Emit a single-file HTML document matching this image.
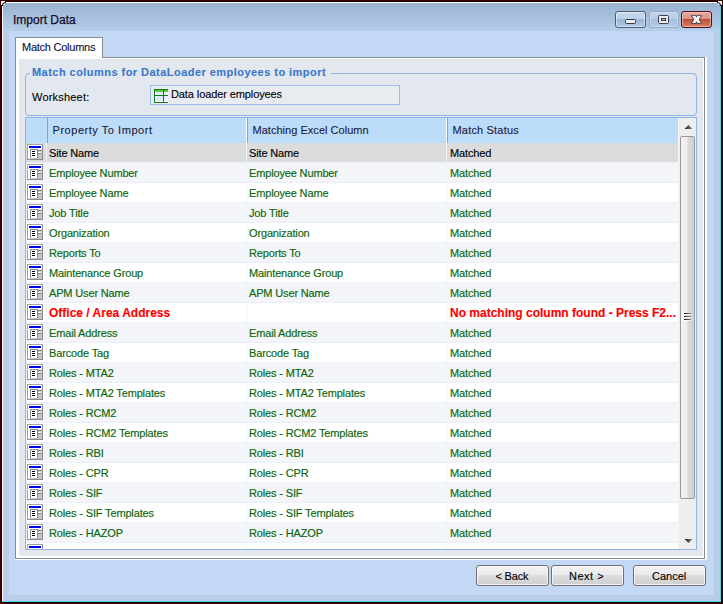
<!DOCTYPE html>
<html><head><meta charset="utf-8"><style>
*{box-sizing:border-box}
html,body{margin:0;padding:0}
body{width:723px;height:604px;position:relative;overflow:hidden;background:#3c0000;font-family:"Liberation Sans",sans-serif;font-size:11px;color:#000;-webkit-text-stroke:0.1px currentColor}
#blk{position:absolute;left:1px;top:1px;width:721px;height:602px;background:#0c0000}
#frame{position:absolute;left:2px;top:2px;width:719px;height:600px;background:#b9cee6;border-left:1px solid #fff;border-top:1px solid #fff}
#cyanR{position:absolute;left:720px;top:2px;width:1px;height:600px;background:#4fd8f8}
#cyanB{position:absolute;left:2px;top:601px;width:719px;height:1px;background:#4fd8f8}
#title{position:absolute;left:3px;top:3px;width:717px;height:28px;background:linear-gradient(#99b2d0,#b5cfea)}
#ttext{position:absolute;left:13px;top:13px;font-size:12px;color:#140c28;-webkit-text-stroke:0.25px #140c28;white-space:nowrap}
#body{position:absolute;left:9px;top:31px;width:705px;height:564px;background:#c3d8f5}
.wb{position:absolute;top:11px;height:17px;border-radius:3px}
#bmin{left:615px;width:31px;border:1px solid #4e5d72;background:linear-gradient(#c5d8ee 0,#bcd1ea 45%,#9ab6d6 46%,#b0c8e4 100%);box-shadow:inset 0 0 0 1px rgba(255,255,255,.5)}
#bmax{left:649px;width:30px;border:1px solid #8ca6c6;background:linear-gradient(#bfd3ec 0,#b8cde8 45%,#a3bddc 46%,#b6cde8 100%);box-shadow:inset 0 0 0 1px rgba(255,255,255,.35)}
#bclose{left:681px;width:31px;border:1px solid #4a0f18;background:linear-gradient(#e8aa9c 0,#dc9484 45%,#c04a30 46%,#d8806a 100%);box-shadow:inset 0 0 0 1px rgba(255,210,200,.6)}
#tab{position:absolute;left:15px;top:37px;width:88px;height:21px;background:#fff;border:1px solid #898c95;border-bottom:none}
#tabtext{position:absolute;left:22px;top:41px;white-space:nowrap;color:#0c0c40;letter-spacing:-0.25px}
#panel{position:absolute;left:15px;top:57px;width:690px;height:502px;border:1px solid #898c95;background:#e3e7ee}
#pwr{position:absolute;left:705px;top:57px;width:2px;height:503px;background:#fff}
#pwb{position:absolute;left:15px;top:559px;width:692px;height:1px;background:#fff}
#pwhite{position:absolute;left:16px;top:58px;width:688px;height:500px;border-left:3px solid #fff;border-top:1px solid #fff;border-right:1px solid #fff;border-bottom:2px solid #fff}
#tabjoin{position:absolute;left:16px;top:57px;width:86px;height:2px;background:#fff}
#gbox{position:absolute;left:25px;top:73px;width:672px;height:43px;border:1px solid #92b4e2;border-radius:4px}
#gtitle{position:absolute;left:30px;top:66px;padding:0 5px 0 2px;background:#e3e7ee;font-weight:bold;color:#3a78cc;white-space:nowrap;letter-spacing:0.46px}
#wlabel{position:absolute;left:32px;top:91px;white-space:nowrap;color:#000;letter-spacing:0.2px}
#combo{position:absolute;left:150px;top:85px;width:250px;height:20px;border:1px solid #9bbbe6;background:#e8ebf0}
#ctext{position:absolute;left:171px;top:88px;white-space:nowrap;color:#000;letter-spacing:-0.1px}
#grid{position:absolute;left:25px;top:117px;width:672px;height:433px;border:1px solid #8fb3e2;background:#fff;overflow:hidden}
#hdr{position:absolute;left:0;top:0;width:652px;height:25px;background:#bcdcf9}
.hd{position:absolute;top:0;height:25px;width:2px;border-left:1px solid #fff;border-right:1px solid #9a9fa8}
.ht{position:absolute;top:6px;white-space:nowrap;color:#1a1a3a;letter-spacing:0.4px}
.row{position:absolute;left:0;width:652px;height:20px;border-bottom:1px solid #e9eff8}
.row.even{background:#fff}
.row.odd{background:#f3f5f8}
.row.sel{background:#dcdcdc}
.rh{position:absolute;left:0;top:0;width:21px;height:19px;border-right:1px solid #eef3fb}
.ic{position:absolute;left:1px;top:1px}
.c{position:absolute;top:4px;white-space:nowrap;color:#0a650a;letter-spacing:-0.15px;-webkit-text-stroke:0.15px currentColor}
.sel .c{color:#000}
.c1{left:23px}
.c2{left:223px}
.c3{left:424px}
.cd{position:absolute;top:0;width:1px;height:19px;background:#eef3fb}
.red .c{color:#ff0000;font-weight:bold;letter-spacing:0;font-size:12px;top:3px}
#sb{position:absolute;left:652px;top:0;width:18px;height:431px;background:#eeeeee;border-left:1px solid #f6f6f6}
#thumb{position:absolute;left:1px;top:18px;width:15px;height:363px;border:1px solid #989898;border-radius:2px;background:linear-gradient(90deg,#f4f4f4,#ececec 45%,#d9d9d9 55%,#cfcfcf)}
.btn{position:absolute;top:565px;height:21px;border:1px solid #707070;border-radius:3px;background:linear-gradient(#f2f2f2 0,#ebebeb 45%,#dddddd 50%,#cfcfcf 100%);box-shadow:inset 0 0 0 1px rgba(255,255,255,.7)}
.bt{position:absolute;top:570px;white-space:nowrap;color:#000}

</style></head><body>
<div id="blk"></div><div id="frame"></div>
<div id="cyanR"></div><div id="cyanB"></div>
<div id="title"></div>
<svg style="position:absolute;left:0;top:0" width="723" height="8">
<rect x="1" y="1" width="4" height="4" fill="#ffffff"/>
<path d="M2.5 6 Q2.5 2.5 6 2.5" stroke="#2a1a1a" stroke-width="1.2" fill="none"/>
<rect x="718" y="1" width="4" height="4" fill="#ffffff"/>
<path d="M717 2.5 Q720.5 2.5 720.5 6" stroke="#2a1a1a" stroke-width="1.2" fill="none"/>
</svg>
<div id="ttext">Import Data</div>
<div class="wb" id="bmin"></div>
<div class="wb" id="bmax"></div>
<div class="wb" id="bclose"></div>
<svg style="position:absolute;left:0;top:0" width="723" height="40">
<rect x="625.5" y="19.5" width="10" height="4" rx="1" fill="#ebebeb" stroke="#333b4c" stroke-width="1"/>
<rect x="658.5" y="15.5" width="10" height="8" rx="1" fill="#ebebeb" stroke="#3a4052" stroke-width="1"/>
<rect x="661.5" y="18.5" width="4" height="2" fill="#a9c0dc" stroke="#3a4052" stroke-width="1"/>
<path d="M692 15.8 L695.4 15.8 L696.5 17.5 L697.6 15.8 L701 15.8 L698.7 19.4 L701 23 L697.6 23 L696.5 21.3 L695.4 23 L692 23 L694.3 19.4 Z" fill="#f4f4f4" stroke="#343c50" stroke-width="1.7" stroke-linejoin="round" paint-order="stroke"/>
</svg>
<div id="body"></div>
<div id="panel"></div>
<div id="pwhite"></div><div id="pwr"></div><div id="pwb"></div>
<div id="tab"></div>
<div id="tabjoin"></div>
<div id="tabtext">Match Columns</div>
<div id="gbox"></div>
<div id="gtitle">Match columns for DataLoader employees to import</div>
<div id="wlabel">Worksheet:</div>
<div id="combo"></div>
<svg style="position:absolute;left:154px;top:89px" width="14" height="14" shape-rendering="crispEdges">
<rect x="0" y="0" width="14" height="14" fill="#137a17"/>
<rect x="1" y="1" width="8" height="2" fill="#5ec93c"/><rect x="10" y="1" width="4" height="2" fill="#5ec93c"/>
<rect x="1" y="3" width="8" height="3" fill="#dcebf9"/><rect x="10" y="3" width="4" height="3" fill="#e6f1fb"/>
<rect x="1" y="7" width="8" height="6" fill="#dcebf9"/><rect x="10" y="7" width="4" height="6" fill="#e6f1fb"/>
<rect x="1" y="3" width="1" height="3" fill="#fff"/><rect x="1" y="7" width="1" height="6" fill="#fff"/>
<rect x="1" y="12" width="8" height="1" fill="#fff"/><rect x="10" y="12" width="4" height="1" fill="#fff"/>
</svg>
<div id="ctext">Data loader employees</div>
<div id="grid">
<div id="hdr">
<div class="hd" style="left:21px;width:1px;border-left:none"></div>
<div class="hd" style="left:220px"></div>
<div class="hd" style="left:420px"></div>
<div class="ht" style="left:26.5px;letter-spacing:0.54px">Property To Import</div>
<div class="ht" style="left:226.5px;letter-spacing:0.03px">Matching Excel Column</div>
<div class="ht" style="left:426.5px;letter-spacing:0.18px">Match Status</div>
</div>
<div class="row sel" style="top:25px"><div class="rh"><svg class="ic" width="16" height="16" viewBox="0 0 16 16" shape-rendering="crispEdges"><rect x="0" y="0" width="16" height="16" fill="#a4a4a4"/><rect x="1" y="1" width="14" height="14" fill="#ffffff"/><rect x="2" y="2" width="12" height="2" fill="#0000ff"/><rect x="3" y="5" width="12" height="10" fill="#c4c4c4"/><rect x="3" y="5" width="8" height="9" fill="#8c8c8c"/><rect x="4" y="6" width="6" height="8" fill="#ffffff"/><rect x="5" y="7" width="3" height="1" fill="#000"/><rect x="5" y="9" width="3" height="1" fill="#000"/><rect x="5" y="11" width="3" height="1" fill="#000"/><rect x="11" y="5" width="3" height="1" fill="#ffffff"/><rect x="11" y="6" width="3" height="1" fill="#7c7c7c"/><rect x="11" y="8" width="3" height="1" fill="#ffffff"/><rect x="11" y="9" width="3" height="1" fill="#7c7c7c"/><rect x="15" y="1" width="1" height="15" fill="#8a8a8a"/><rect x="0" y="15" width="16" height="1" fill="#8a8a8a"/></svg></div><div class="cd" style="left:220px"></div><div class="cd" style="left:420px"></div><div class="c c1">Site Name</div><div class="c c2">Site Name</div><div class="c c3">Matched</div></div>
<div class="row odd" style="top:45px"><div class="rh"><svg class="ic" width="16" height="16" viewBox="0 0 16 16" shape-rendering="crispEdges"><rect x="0" y="0" width="16" height="16" fill="#a4a4a4"/><rect x="1" y="1" width="14" height="14" fill="#ffffff"/><rect x="2" y="2" width="12" height="2" fill="#0000ff"/><rect x="3" y="5" width="12" height="10" fill="#c4c4c4"/><rect x="3" y="5" width="8" height="9" fill="#8c8c8c"/><rect x="4" y="6" width="6" height="8" fill="#ffffff"/><rect x="5" y="7" width="3" height="1" fill="#000"/><rect x="5" y="9" width="3" height="1" fill="#000"/><rect x="5" y="11" width="3" height="1" fill="#000"/><rect x="11" y="5" width="3" height="1" fill="#ffffff"/><rect x="11" y="6" width="3" height="1" fill="#7c7c7c"/><rect x="11" y="8" width="3" height="1" fill="#ffffff"/><rect x="11" y="9" width="3" height="1" fill="#7c7c7c"/><rect x="15" y="1" width="1" height="15" fill="#8a8a8a"/><rect x="0" y="15" width="16" height="1" fill="#8a8a8a"/></svg></div><div class="cd" style="left:220px"></div><div class="cd" style="left:420px"></div><div class="c c1">Employee Number</div><div class="c c2">Employee Number</div><div class="c c3">Matched</div></div>
<div class="row even" style="top:65px"><div class="rh"><svg class="ic" width="16" height="16" viewBox="0 0 16 16" shape-rendering="crispEdges"><rect x="0" y="0" width="16" height="16" fill="#a4a4a4"/><rect x="1" y="1" width="14" height="14" fill="#ffffff"/><rect x="2" y="2" width="12" height="2" fill="#0000ff"/><rect x="3" y="5" width="12" height="10" fill="#c4c4c4"/><rect x="3" y="5" width="8" height="9" fill="#8c8c8c"/><rect x="4" y="6" width="6" height="8" fill="#ffffff"/><rect x="5" y="7" width="3" height="1" fill="#000"/><rect x="5" y="9" width="3" height="1" fill="#000"/><rect x="5" y="11" width="3" height="1" fill="#000"/><rect x="11" y="5" width="3" height="1" fill="#ffffff"/><rect x="11" y="6" width="3" height="1" fill="#7c7c7c"/><rect x="11" y="8" width="3" height="1" fill="#ffffff"/><rect x="11" y="9" width="3" height="1" fill="#7c7c7c"/><rect x="15" y="1" width="1" height="15" fill="#8a8a8a"/><rect x="0" y="15" width="16" height="1" fill="#8a8a8a"/></svg></div><div class="cd" style="left:220px"></div><div class="cd" style="left:420px"></div><div class="c c1">Employee Name</div><div class="c c2">Employee Name</div><div class="c c3">Matched</div></div>
<div class="row odd" style="top:85px"><div class="rh"><svg class="ic" width="16" height="16" viewBox="0 0 16 16" shape-rendering="crispEdges"><rect x="0" y="0" width="16" height="16" fill="#a4a4a4"/><rect x="1" y="1" width="14" height="14" fill="#ffffff"/><rect x="2" y="2" width="12" height="2" fill="#0000ff"/><rect x="3" y="5" width="12" height="10" fill="#c4c4c4"/><rect x="3" y="5" width="8" height="9" fill="#8c8c8c"/><rect x="4" y="6" width="6" height="8" fill="#ffffff"/><rect x="5" y="7" width="3" height="1" fill="#000"/><rect x="5" y="9" width="3" height="1" fill="#000"/><rect x="5" y="11" width="3" height="1" fill="#000"/><rect x="11" y="5" width="3" height="1" fill="#ffffff"/><rect x="11" y="6" width="3" height="1" fill="#7c7c7c"/><rect x="11" y="8" width="3" height="1" fill="#ffffff"/><rect x="11" y="9" width="3" height="1" fill="#7c7c7c"/><rect x="15" y="1" width="1" height="15" fill="#8a8a8a"/><rect x="0" y="15" width="16" height="1" fill="#8a8a8a"/></svg></div><div class="cd" style="left:220px"></div><div class="cd" style="left:420px"></div><div class="c c1">Job Title</div><div class="c c2">Job Title</div><div class="c c3">Matched</div></div>
<div class="row even" style="top:105px"><div class="rh"><svg class="ic" width="16" height="16" viewBox="0 0 16 16" shape-rendering="crispEdges"><rect x="0" y="0" width="16" height="16" fill="#a4a4a4"/><rect x="1" y="1" width="14" height="14" fill="#ffffff"/><rect x="2" y="2" width="12" height="2" fill="#0000ff"/><rect x="3" y="5" width="12" height="10" fill="#c4c4c4"/><rect x="3" y="5" width="8" height="9" fill="#8c8c8c"/><rect x="4" y="6" width="6" height="8" fill="#ffffff"/><rect x="5" y="7" width="3" height="1" fill="#000"/><rect x="5" y="9" width="3" height="1" fill="#000"/><rect x="5" y="11" width="3" height="1" fill="#000"/><rect x="11" y="5" width="3" height="1" fill="#ffffff"/><rect x="11" y="6" width="3" height="1" fill="#7c7c7c"/><rect x="11" y="8" width="3" height="1" fill="#ffffff"/><rect x="11" y="9" width="3" height="1" fill="#7c7c7c"/><rect x="15" y="1" width="1" height="15" fill="#8a8a8a"/><rect x="0" y="15" width="16" height="1" fill="#8a8a8a"/></svg></div><div class="cd" style="left:220px"></div><div class="cd" style="left:420px"></div><div class="c c1">Organization</div><div class="c c2">Organization</div><div class="c c3">Matched</div></div>
<div class="row odd" style="top:125px"><div class="rh"><svg class="ic" width="16" height="16" viewBox="0 0 16 16" shape-rendering="crispEdges"><rect x="0" y="0" width="16" height="16" fill="#a4a4a4"/><rect x="1" y="1" width="14" height="14" fill="#ffffff"/><rect x="2" y="2" width="12" height="2" fill="#0000ff"/><rect x="3" y="5" width="12" height="10" fill="#c4c4c4"/><rect x="3" y="5" width="8" height="9" fill="#8c8c8c"/><rect x="4" y="6" width="6" height="8" fill="#ffffff"/><rect x="5" y="7" width="3" height="1" fill="#000"/><rect x="5" y="9" width="3" height="1" fill="#000"/><rect x="5" y="11" width="3" height="1" fill="#000"/><rect x="11" y="5" width="3" height="1" fill="#ffffff"/><rect x="11" y="6" width="3" height="1" fill="#7c7c7c"/><rect x="11" y="8" width="3" height="1" fill="#ffffff"/><rect x="11" y="9" width="3" height="1" fill="#7c7c7c"/><rect x="15" y="1" width="1" height="15" fill="#8a8a8a"/><rect x="0" y="15" width="16" height="1" fill="#8a8a8a"/></svg></div><div class="cd" style="left:220px"></div><div class="cd" style="left:420px"></div><div class="c c1">Reports To</div><div class="c c2">Reports To</div><div class="c c3">Matched</div></div>
<div class="row even" style="top:145px"><div class="rh"><svg class="ic" width="16" height="16" viewBox="0 0 16 16" shape-rendering="crispEdges"><rect x="0" y="0" width="16" height="16" fill="#a4a4a4"/><rect x="1" y="1" width="14" height="14" fill="#ffffff"/><rect x="2" y="2" width="12" height="2" fill="#0000ff"/><rect x="3" y="5" width="12" height="10" fill="#c4c4c4"/><rect x="3" y="5" width="8" height="9" fill="#8c8c8c"/><rect x="4" y="6" width="6" height="8" fill="#ffffff"/><rect x="5" y="7" width="3" height="1" fill="#000"/><rect x="5" y="9" width="3" height="1" fill="#000"/><rect x="5" y="11" width="3" height="1" fill="#000"/><rect x="11" y="5" width="3" height="1" fill="#ffffff"/><rect x="11" y="6" width="3" height="1" fill="#7c7c7c"/><rect x="11" y="8" width="3" height="1" fill="#ffffff"/><rect x="11" y="9" width="3" height="1" fill="#7c7c7c"/><rect x="15" y="1" width="1" height="15" fill="#8a8a8a"/><rect x="0" y="15" width="16" height="1" fill="#8a8a8a"/></svg></div><div class="cd" style="left:220px"></div><div class="cd" style="left:420px"></div><div class="c c1">Maintenance Group</div><div class="c c2">Maintenance Group</div><div class="c c3">Matched</div></div>
<div class="row odd" style="top:165px"><div class="rh"><svg class="ic" width="16" height="16" viewBox="0 0 16 16" shape-rendering="crispEdges"><rect x="0" y="0" width="16" height="16" fill="#a4a4a4"/><rect x="1" y="1" width="14" height="14" fill="#ffffff"/><rect x="2" y="2" width="12" height="2" fill="#0000ff"/><rect x="3" y="5" width="12" height="10" fill="#c4c4c4"/><rect x="3" y="5" width="8" height="9" fill="#8c8c8c"/><rect x="4" y="6" width="6" height="8" fill="#ffffff"/><rect x="5" y="7" width="3" height="1" fill="#000"/><rect x="5" y="9" width="3" height="1" fill="#000"/><rect x="5" y="11" width="3" height="1" fill="#000"/><rect x="11" y="5" width="3" height="1" fill="#ffffff"/><rect x="11" y="6" width="3" height="1" fill="#7c7c7c"/><rect x="11" y="8" width="3" height="1" fill="#ffffff"/><rect x="11" y="9" width="3" height="1" fill="#7c7c7c"/><rect x="15" y="1" width="1" height="15" fill="#8a8a8a"/><rect x="0" y="15" width="16" height="1" fill="#8a8a8a"/></svg></div><div class="cd" style="left:220px"></div><div class="cd" style="left:420px"></div><div class="c c1">APM User Name</div><div class="c c2">APM User Name</div><div class="c c3">Matched</div></div>
<div class="row even red" style="top:185px"><div class="rh"><svg class="ic" width="16" height="16" viewBox="0 0 16 16" shape-rendering="crispEdges"><rect x="0" y="0" width="16" height="16" fill="#a4a4a4"/><rect x="1" y="1" width="14" height="14" fill="#ffffff"/><rect x="2" y="2" width="12" height="2" fill="#0000ff"/><rect x="3" y="5" width="12" height="10" fill="#c4c4c4"/><rect x="3" y="5" width="8" height="9" fill="#8c8c8c"/><rect x="4" y="6" width="6" height="8" fill="#ffffff"/><rect x="5" y="7" width="3" height="1" fill="#000"/><rect x="5" y="9" width="3" height="1" fill="#000"/><rect x="5" y="11" width="3" height="1" fill="#000"/><rect x="11" y="5" width="3" height="1" fill="#ffffff"/><rect x="11" y="6" width="3" height="1" fill="#7c7c7c"/><rect x="11" y="8" width="3" height="1" fill="#ffffff"/><rect x="11" y="9" width="3" height="1" fill="#7c7c7c"/><rect x="15" y="1" width="1" height="15" fill="#8a8a8a"/><rect x="0" y="15" width="16" height="1" fill="#8a8a8a"/></svg></div><div class="cd" style="left:220px"></div><div class="cd" style="left:420px"></div><div class="c c1">Office / Area Address</div><div class="c c2"></div><div class="c c3">No matching column found - Press F2...</div></div>
<div class="row odd" style="top:205px"><div class="rh"><svg class="ic" width="16" height="16" viewBox="0 0 16 16" shape-rendering="crispEdges"><rect x="0" y="0" width="16" height="16" fill="#a4a4a4"/><rect x="1" y="1" width="14" height="14" fill="#ffffff"/><rect x="2" y="2" width="12" height="2" fill="#0000ff"/><rect x="3" y="5" width="12" height="10" fill="#c4c4c4"/><rect x="3" y="5" width="8" height="9" fill="#8c8c8c"/><rect x="4" y="6" width="6" height="8" fill="#ffffff"/><rect x="5" y="7" width="3" height="1" fill="#000"/><rect x="5" y="9" width="3" height="1" fill="#000"/><rect x="5" y="11" width="3" height="1" fill="#000"/><rect x="11" y="5" width="3" height="1" fill="#ffffff"/><rect x="11" y="6" width="3" height="1" fill="#7c7c7c"/><rect x="11" y="8" width="3" height="1" fill="#ffffff"/><rect x="11" y="9" width="3" height="1" fill="#7c7c7c"/><rect x="15" y="1" width="1" height="15" fill="#8a8a8a"/><rect x="0" y="15" width="16" height="1" fill="#8a8a8a"/></svg></div><div class="cd" style="left:220px"></div><div class="cd" style="left:420px"></div><div class="c c1">Email Address</div><div class="c c2">Email Address</div><div class="c c3">Matched</div></div>
<div class="row even" style="top:225px"><div class="rh"><svg class="ic" width="16" height="16" viewBox="0 0 16 16" shape-rendering="crispEdges"><rect x="0" y="0" width="16" height="16" fill="#a4a4a4"/><rect x="1" y="1" width="14" height="14" fill="#ffffff"/><rect x="2" y="2" width="12" height="2" fill="#0000ff"/><rect x="3" y="5" width="12" height="10" fill="#c4c4c4"/><rect x="3" y="5" width="8" height="9" fill="#8c8c8c"/><rect x="4" y="6" width="6" height="8" fill="#ffffff"/><rect x="5" y="7" width="3" height="1" fill="#000"/><rect x="5" y="9" width="3" height="1" fill="#000"/><rect x="5" y="11" width="3" height="1" fill="#000"/><rect x="11" y="5" width="3" height="1" fill="#ffffff"/><rect x="11" y="6" width="3" height="1" fill="#7c7c7c"/><rect x="11" y="8" width="3" height="1" fill="#ffffff"/><rect x="11" y="9" width="3" height="1" fill="#7c7c7c"/><rect x="15" y="1" width="1" height="15" fill="#8a8a8a"/><rect x="0" y="15" width="16" height="1" fill="#8a8a8a"/></svg></div><div class="cd" style="left:220px"></div><div class="cd" style="left:420px"></div><div class="c c1">Barcode Tag</div><div class="c c2">Barcode Tag</div><div class="c c3">Matched</div></div>
<div class="row odd" style="top:245px"><div class="rh"><svg class="ic" width="16" height="16" viewBox="0 0 16 16" shape-rendering="crispEdges"><rect x="0" y="0" width="16" height="16" fill="#a4a4a4"/><rect x="1" y="1" width="14" height="14" fill="#ffffff"/><rect x="2" y="2" width="12" height="2" fill="#0000ff"/><rect x="3" y="5" width="12" height="10" fill="#c4c4c4"/><rect x="3" y="5" width="8" height="9" fill="#8c8c8c"/><rect x="4" y="6" width="6" height="8" fill="#ffffff"/><rect x="5" y="7" width="3" height="1" fill="#000"/><rect x="5" y="9" width="3" height="1" fill="#000"/><rect x="5" y="11" width="3" height="1" fill="#000"/><rect x="11" y="5" width="3" height="1" fill="#ffffff"/><rect x="11" y="6" width="3" height="1" fill="#7c7c7c"/><rect x="11" y="8" width="3" height="1" fill="#ffffff"/><rect x="11" y="9" width="3" height="1" fill="#7c7c7c"/><rect x="15" y="1" width="1" height="15" fill="#8a8a8a"/><rect x="0" y="15" width="16" height="1" fill="#8a8a8a"/></svg></div><div class="cd" style="left:220px"></div><div class="cd" style="left:420px"></div><div class="c c1">Roles - MTA2</div><div class="c c2">Roles - MTA2</div><div class="c c3">Matched</div></div>
<div class="row even" style="top:265px"><div class="rh"><svg class="ic" width="16" height="16" viewBox="0 0 16 16" shape-rendering="crispEdges"><rect x="0" y="0" width="16" height="16" fill="#a4a4a4"/><rect x="1" y="1" width="14" height="14" fill="#ffffff"/><rect x="2" y="2" width="12" height="2" fill="#0000ff"/><rect x="3" y="5" width="12" height="10" fill="#c4c4c4"/><rect x="3" y="5" width="8" height="9" fill="#8c8c8c"/><rect x="4" y="6" width="6" height="8" fill="#ffffff"/><rect x="5" y="7" width="3" height="1" fill="#000"/><rect x="5" y="9" width="3" height="1" fill="#000"/><rect x="5" y="11" width="3" height="1" fill="#000"/><rect x="11" y="5" width="3" height="1" fill="#ffffff"/><rect x="11" y="6" width="3" height="1" fill="#7c7c7c"/><rect x="11" y="8" width="3" height="1" fill="#ffffff"/><rect x="11" y="9" width="3" height="1" fill="#7c7c7c"/><rect x="15" y="1" width="1" height="15" fill="#8a8a8a"/><rect x="0" y="15" width="16" height="1" fill="#8a8a8a"/></svg></div><div class="cd" style="left:220px"></div><div class="cd" style="left:420px"></div><div class="c c1">Roles - MTA2 Templates</div><div class="c c2">Roles - MTA2 Templates</div><div class="c c3">Matched</div></div>
<div class="row odd" style="top:285px"><div class="rh"><svg class="ic" width="16" height="16" viewBox="0 0 16 16" shape-rendering="crispEdges"><rect x="0" y="0" width="16" height="16" fill="#a4a4a4"/><rect x="1" y="1" width="14" height="14" fill="#ffffff"/><rect x="2" y="2" width="12" height="2" fill="#0000ff"/><rect x="3" y="5" width="12" height="10" fill="#c4c4c4"/><rect x="3" y="5" width="8" height="9" fill="#8c8c8c"/><rect x="4" y="6" width="6" height="8" fill="#ffffff"/><rect x="5" y="7" width="3" height="1" fill="#000"/><rect x="5" y="9" width="3" height="1" fill="#000"/><rect x="5" y="11" width="3" height="1" fill="#000"/><rect x="11" y="5" width="3" height="1" fill="#ffffff"/><rect x="11" y="6" width="3" height="1" fill="#7c7c7c"/><rect x="11" y="8" width="3" height="1" fill="#ffffff"/><rect x="11" y="9" width="3" height="1" fill="#7c7c7c"/><rect x="15" y="1" width="1" height="15" fill="#8a8a8a"/><rect x="0" y="15" width="16" height="1" fill="#8a8a8a"/></svg></div><div class="cd" style="left:220px"></div><div class="cd" style="left:420px"></div><div class="c c1">Roles - RCM2</div><div class="c c2">Roles - RCM2</div><div class="c c3">Matched</div></div>
<div class="row even" style="top:305px"><div class="rh"><svg class="ic" width="16" height="16" viewBox="0 0 16 16" shape-rendering="crispEdges"><rect x="0" y="0" width="16" height="16" fill="#a4a4a4"/><rect x="1" y="1" width="14" height="14" fill="#ffffff"/><rect x="2" y="2" width="12" height="2" fill="#0000ff"/><rect x="3" y="5" width="12" height="10" fill="#c4c4c4"/><rect x="3" y="5" width="8" height="9" fill="#8c8c8c"/><rect x="4" y="6" width="6" height="8" fill="#ffffff"/><rect x="5" y="7" width="3" height="1" fill="#000"/><rect x="5" y="9" width="3" height="1" fill="#000"/><rect x="5" y="11" width="3" height="1" fill="#000"/><rect x="11" y="5" width="3" height="1" fill="#ffffff"/><rect x="11" y="6" width="3" height="1" fill="#7c7c7c"/><rect x="11" y="8" width="3" height="1" fill="#ffffff"/><rect x="11" y="9" width="3" height="1" fill="#7c7c7c"/><rect x="15" y="1" width="1" height="15" fill="#8a8a8a"/><rect x="0" y="15" width="16" height="1" fill="#8a8a8a"/></svg></div><div class="cd" style="left:220px"></div><div class="cd" style="left:420px"></div><div class="c c1">Roles - RCM2 Templates</div><div class="c c2">Roles - RCM2 Templates</div><div class="c c3">Matched</div></div>
<div class="row odd" style="top:325px"><div class="rh"><svg class="ic" width="16" height="16" viewBox="0 0 16 16" shape-rendering="crispEdges"><rect x="0" y="0" width="16" height="16" fill="#a4a4a4"/><rect x="1" y="1" width="14" height="14" fill="#ffffff"/><rect x="2" y="2" width="12" height="2" fill="#0000ff"/><rect x="3" y="5" width="12" height="10" fill="#c4c4c4"/><rect x="3" y="5" width="8" height="9" fill="#8c8c8c"/><rect x="4" y="6" width="6" height="8" fill="#ffffff"/><rect x="5" y="7" width="3" height="1" fill="#000"/><rect x="5" y="9" width="3" height="1" fill="#000"/><rect x="5" y="11" width="3" height="1" fill="#000"/><rect x="11" y="5" width="3" height="1" fill="#ffffff"/><rect x="11" y="6" width="3" height="1" fill="#7c7c7c"/><rect x="11" y="8" width="3" height="1" fill="#ffffff"/><rect x="11" y="9" width="3" height="1" fill="#7c7c7c"/><rect x="15" y="1" width="1" height="15" fill="#8a8a8a"/><rect x="0" y="15" width="16" height="1" fill="#8a8a8a"/></svg></div><div class="cd" style="left:220px"></div><div class="cd" style="left:420px"></div><div class="c c1">Roles - RBI</div><div class="c c2">Roles - RBI</div><div class="c c3">Matched</div></div>
<div class="row even" style="top:345px"><div class="rh"><svg class="ic" width="16" height="16" viewBox="0 0 16 16" shape-rendering="crispEdges"><rect x="0" y="0" width="16" height="16" fill="#a4a4a4"/><rect x="1" y="1" width="14" height="14" fill="#ffffff"/><rect x="2" y="2" width="12" height="2" fill="#0000ff"/><rect x="3" y="5" width="12" height="10" fill="#c4c4c4"/><rect x="3" y="5" width="8" height="9" fill="#8c8c8c"/><rect x="4" y="6" width="6" height="8" fill="#ffffff"/><rect x="5" y="7" width="3" height="1" fill="#000"/><rect x="5" y="9" width="3" height="1" fill="#000"/><rect x="5" y="11" width="3" height="1" fill="#000"/><rect x="11" y="5" width="3" height="1" fill="#ffffff"/><rect x="11" y="6" width="3" height="1" fill="#7c7c7c"/><rect x="11" y="8" width="3" height="1" fill="#ffffff"/><rect x="11" y="9" width="3" height="1" fill="#7c7c7c"/><rect x="15" y="1" width="1" height="15" fill="#8a8a8a"/><rect x="0" y="15" width="16" height="1" fill="#8a8a8a"/></svg></div><div class="cd" style="left:220px"></div><div class="cd" style="left:420px"></div><div class="c c1">Roles - CPR</div><div class="c c2">Roles - CPR</div><div class="c c3">Matched</div></div>
<div class="row odd" style="top:365px"><div class="rh"><svg class="ic" width="16" height="16" viewBox="0 0 16 16" shape-rendering="crispEdges"><rect x="0" y="0" width="16" height="16" fill="#a4a4a4"/><rect x="1" y="1" width="14" height="14" fill="#ffffff"/><rect x="2" y="2" width="12" height="2" fill="#0000ff"/><rect x="3" y="5" width="12" height="10" fill="#c4c4c4"/><rect x="3" y="5" width="8" height="9" fill="#8c8c8c"/><rect x="4" y="6" width="6" height="8" fill="#ffffff"/><rect x="5" y="7" width="3" height="1" fill="#000"/><rect x="5" y="9" width="3" height="1" fill="#000"/><rect x="5" y="11" width="3" height="1" fill="#000"/><rect x="11" y="5" width="3" height="1" fill="#ffffff"/><rect x="11" y="6" width="3" height="1" fill="#7c7c7c"/><rect x="11" y="8" width="3" height="1" fill="#ffffff"/><rect x="11" y="9" width="3" height="1" fill="#7c7c7c"/><rect x="15" y="1" width="1" height="15" fill="#8a8a8a"/><rect x="0" y="15" width="16" height="1" fill="#8a8a8a"/></svg></div><div class="cd" style="left:220px"></div><div class="cd" style="left:420px"></div><div class="c c1">Roles - SIF</div><div class="c c2">Roles - SIF</div><div class="c c3">Matched</div></div>
<div class="row even" style="top:385px"><div class="rh"><svg class="ic" width="16" height="16" viewBox="0 0 16 16" shape-rendering="crispEdges"><rect x="0" y="0" width="16" height="16" fill="#a4a4a4"/><rect x="1" y="1" width="14" height="14" fill="#ffffff"/><rect x="2" y="2" width="12" height="2" fill="#0000ff"/><rect x="3" y="5" width="12" height="10" fill="#c4c4c4"/><rect x="3" y="5" width="8" height="9" fill="#8c8c8c"/><rect x="4" y="6" width="6" height="8" fill="#ffffff"/><rect x="5" y="7" width="3" height="1" fill="#000"/><rect x="5" y="9" width="3" height="1" fill="#000"/><rect x="5" y="11" width="3" height="1" fill="#000"/><rect x="11" y="5" width="3" height="1" fill="#ffffff"/><rect x="11" y="6" width="3" height="1" fill="#7c7c7c"/><rect x="11" y="8" width="3" height="1" fill="#ffffff"/><rect x="11" y="9" width="3" height="1" fill="#7c7c7c"/><rect x="15" y="1" width="1" height="15" fill="#8a8a8a"/><rect x="0" y="15" width="16" height="1" fill="#8a8a8a"/></svg></div><div class="cd" style="left:220px"></div><div class="cd" style="left:420px"></div><div class="c c1">Roles - SIF Templates</div><div class="c c2">Roles - SIF Templates</div><div class="c c3">Matched</div></div>
<div class="row odd" style="top:405px"><div class="rh"><svg class="ic" width="16" height="16" viewBox="0 0 16 16" shape-rendering="crispEdges"><rect x="0" y="0" width="16" height="16" fill="#a4a4a4"/><rect x="1" y="1" width="14" height="14" fill="#ffffff"/><rect x="2" y="2" width="12" height="2" fill="#0000ff"/><rect x="3" y="5" width="12" height="10" fill="#c4c4c4"/><rect x="3" y="5" width="8" height="9" fill="#8c8c8c"/><rect x="4" y="6" width="6" height="8" fill="#ffffff"/><rect x="5" y="7" width="3" height="1" fill="#000"/><rect x="5" y="9" width="3" height="1" fill="#000"/><rect x="5" y="11" width="3" height="1" fill="#000"/><rect x="11" y="5" width="3" height="1" fill="#ffffff"/><rect x="11" y="6" width="3" height="1" fill="#7c7c7c"/><rect x="11" y="8" width="3" height="1" fill="#ffffff"/><rect x="11" y="9" width="3" height="1" fill="#7c7c7c"/><rect x="15" y="1" width="1" height="15" fill="#8a8a8a"/><rect x="0" y="15" width="16" height="1" fill="#8a8a8a"/></svg></div><div class="cd" style="left:220px"></div><div class="cd" style="left:420px"></div><div class="c c1">Roles - HAZOP</div><div class="c c2">Roles - HAZOP</div><div class="c c3">Matched</div></div>
<div class="row even" style="top:425px"><div class="rh"><svg class="ic" width="16" height="16" viewBox="0 0 16 16" shape-rendering="crispEdges"><rect x="0" y="0" width="16" height="16" fill="#a4a4a4"/><rect x="1" y="1" width="14" height="14" fill="#ffffff"/><rect x="2" y="2" width="12" height="2" fill="#0000ff"/><rect x="3" y="5" width="12" height="10" fill="#c4c4c4"/><rect x="3" y="5" width="8" height="9" fill="#8c8c8c"/><rect x="4" y="6" width="6" height="8" fill="#ffffff"/><rect x="5" y="7" width="3" height="1" fill="#000"/><rect x="5" y="9" width="3" height="1" fill="#000"/><rect x="5" y="11" width="3" height="1" fill="#000"/><rect x="11" y="5" width="3" height="1" fill="#ffffff"/><rect x="11" y="6" width="3" height="1" fill="#7c7c7c"/><rect x="11" y="8" width="3" height="1" fill="#ffffff"/><rect x="11" y="9" width="3" height="1" fill="#7c7c7c"/><rect x="15" y="1" width="1" height="15" fill="#8a8a8a"/><rect x="0" y="15" width="16" height="1" fill="#8a8a8a"/></svg></div><div class="cd" style="left:220px"></div><div class="cd" style="left:420px"></div><div class="c c1">Roles - HAZOP Templates</div><div class="c c2">Roles - HAZOP Templates</div><div class="c c3">Matched</div></div>
<div id="sb"><div id="thumb"></div>
<svg style="position:absolute;left:0;top:0" width="18" height="431">
<defs><linearGradient id="ag" x1="0" x2="1"><stop offset="0" stop-color="#1a1a1a"/><stop offset="1" stop-color="#8a8a8a"/></linearGradient></defs>
<path d="M5.5 11 L9.5 7 L13.5 11 Z" fill="url(#ag)"/>
<path d="M5.5 421 L13.5 421 L9.5 425 Z" fill="url(#ag)"/>
<rect x="5" y="195" width="7" height="1" fill="url(#ag)"/><rect x="5" y="196" width="7" height="1" fill="#fff" opacity=".8"/>
<rect x="5" y="198" width="7" height="1" fill="url(#ag)"/><rect x="5" y="199" width="7" height="1" fill="#fff" opacity=".8"/>
<rect x="5" y="201" width="7" height="1" fill="url(#ag)"/><rect x="5" y="202" width="7" height="1" fill="#fff" opacity=".8"/>
</svg></div>
</div>
<div class="btn" style="left:476px;width:73px"></div><div class="bt" style="left:495.5px;letter-spacing:-0.2px">&lt; Back</div>
<div class="btn" style="left:551px;width:73px"></div><div class="bt" style="left:569px;letter-spacing:0.5px">Next &gt;</div>
<div class="btn" style="left:633px;width:73px"></div><div class="bt" style="left:652px">Cancel</div>

</body></html>
